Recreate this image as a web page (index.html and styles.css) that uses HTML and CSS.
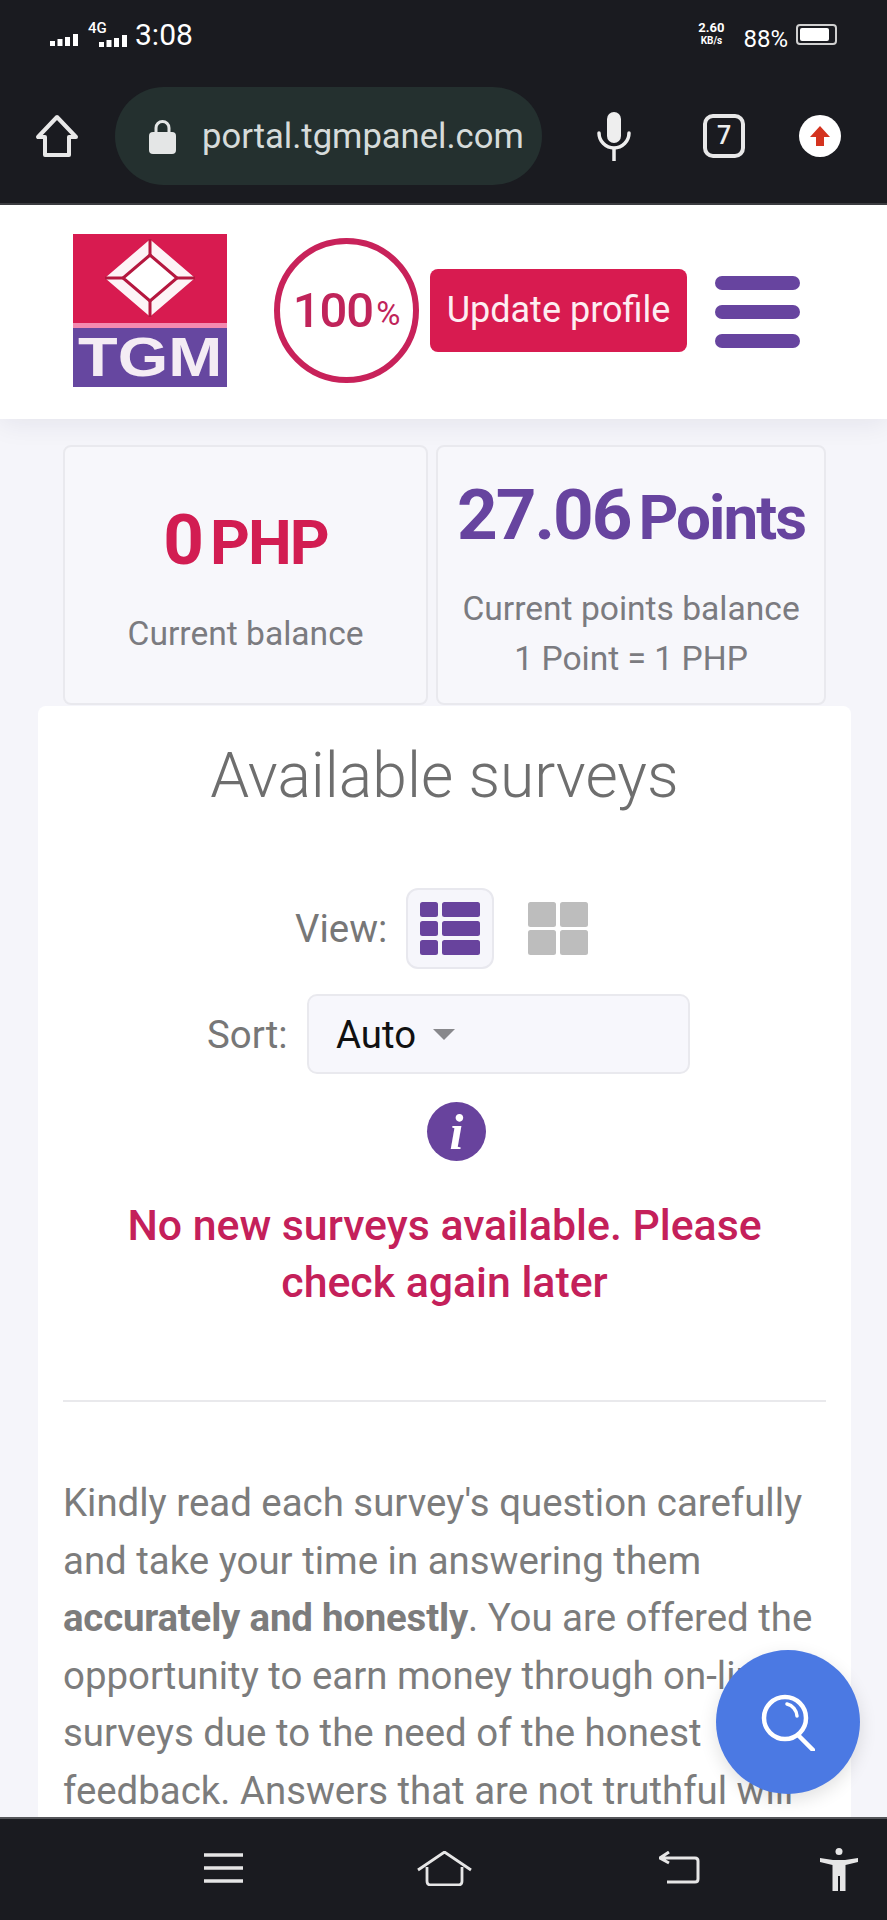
FILE: index.html
```html
<!DOCTYPE html>
<html lang="en">
<head>
<meta charset="utf-8">
<title>TGM Panel</title>
<link rel="stylesheet" href="styles.css">
</head>
<body>
<div class="screen">
  <div class="chrome">
    <div class="status">
      <div class="status-left">
        <svg class="sig1" viewBox="0 0 28 12"><path d="M0 7h5v5H0zM7.500 5h5v7h-5zM15 3h5v9h-5zM23 0h5v12h-5z" fill="#fff"/></svg>
        <div class="net">
          <span class="net-g">4G</span>
          <svg class="sig2" viewBox="0 0 28 12"><path d="M0 7h5v5H0zM7.500 5h5v7h-5zM15 3h5v9h-5zM23 0h5v12h-5z" fill="#fff"/></svg>
        </div>
        <span class="clock">3:08</span>
      </div>
      <div class="status-right">
        <div class="speed"><span class="speed-n">2.60</span><span class="speed-u">KB/s</span></div>
        <span class="batt-t">88%</span>
        <div class="batt"><div class="batt-fill"></div></div>
      </div>
    </div>
    <div class="addr">
      <svg class="i-home" viewBox="0 0 44 44"><path d="M22 3 3 23h7v18h24V23h7z" fill="none" stroke="#e8e8e8" stroke-width="4" stroke-linejoin="round"/></svg>
      <div class="pill">
        <svg class="i-lock" viewBox="0 0 27 35"><path d="M7 15V9a6.500 6.500 0 0 1 13 0v6" fill="none" stroke="#e4e6e6" stroke-width="3"/><rect x="0" y="13" width="27" height="22" rx="4" fill="#e4e6e6"/></svg>
        <span class="url">portal.tgmpanel.com</span>
      </div>
      <svg class="i-mic" viewBox="0 0 34 49"><rect x="10" y="0" width="14" height="31" rx="7" fill="#eee"/><path d="M2 21a15 15 0 0 0 30 0M17 36v13" fill="none" stroke="#eee" stroke-width="3.500" stroke-linecap="round"/></svg>
      <div class="tabs">7</div>
      <div class="update"><svg class="i-up" viewBox="0 0 24 24"><path d="M12 2 22 13h-6v9H8v-9H2z" fill="#d4331f"/></svg></div>
    </div>
  </div>

  <div class="page">
    <header class="head">
      <div class="logo">
        <div class="logo-top">
          <svg class="logo-mark" viewBox="0 0 90 78">
            <path d="M45 3 87 39 45 75 3 39z" fill="#fdf3f6" stroke="#fdf3f6" stroke-width="4" stroke-linejoin="round"/>
            <path d="M45 16 72 39 45 62 18 39z" fill="#fff" stroke="#b5173f" stroke-width="3"/>
            <path d="M45 0v16M45 62v16M0 39h18M72 39h18" stroke="#b5173f" stroke-width="3"/>
          </svg>
        </div>
        <div class="logo-bot"><span class="logo-t">TGM</span></div>
      </div>
      <div class="ring"><span class="ring-n">100</span><span class="ring-p">%</span></div>
      <div class="btn-up">Update profile</div>
      <div class="burger"><span class="bar"></span><span class="bar"></span><span class="bar"></span></div>
    </header>

    <div class="stats">
      <div class="stat">
        <div class="amount red"><span class="big">0</span> <span class="unit">PHP</span></div>
        <div class="lbl">Current balance</div>
      </div>
      <div class="stat">
        <div class="amount purple"><span class="big">27.06</span> <span class="unit">Points</span></div>
        <div class="lbl">Current points balance<br>1 Point = 1 PHP</div>
      </div>
    </div>

    <main class="card">
      <h1 class="title">Available surveys</h1>
      <div class="view-row">
        <span class="ctl-l">View:</span>
        <div class="view-btn active">
          <svg class="i-view" viewBox="0 0 60 53" fill="#68439d">
            <rect width="18" height="15" rx="2.500"/><rect x="22" width="38" height="15" rx="2.500"/>
            <rect y="19" width="18" height="15" rx="2.500"/><rect x="22" y="19" width="38" height="15" rx="2.500"/>
            <rect y="38" width="18" height="15" rx="2.500"/><rect x="22" y="38" width="38" height="15" rx="2.500"/>
          </svg>
        </div>
        <div class="view-btn">
          <svg class="i-view" viewBox="0 0 60 53" fill="#bdbdbd">
            <rect width="28" height="25" rx="2.500"/><rect x="32" width="28" height="25" rx="2.500"/>
            <rect y="28" width="28" height="25" rx="2.500"/><rect x="32" y="28" width="28" height="25" rx="2.500"/>
          </svg>
        </div>
      </div>
      <div class="sort-row">
        <span class="ctl-l">Sort:</span>
        <div class="select"><span>Auto</span><span class="caret"></span></div>
      </div>
      <div class="info"><span class="info-i">i</span></div>
      <p class="none">No new surveys available. Please check again later</p>
      <hr class="rule">
      <p class="copy">Kindly read each survey's question carefully and take your time in answering them <strong>accurately and honestly</strong>. You are offered the opportunity to earn money through on-line surveys due to the need of the honest feedback. Answers that are not truthful will</p>
    </main>
  </div>

  <div class="fab">
    <svg class="i-search" viewBox="0 0 54 57"><circle cx="24" cy="24" r="21" fill="none" stroke="#fff" stroke-width="4.500"/><path d="M37 41 52 56" stroke="#fff" stroke-width="4.500" stroke-linecap="round"/><path d="M26 10a13 13 0 0 1 10 12" fill="none" stroke="#fff" stroke-width="3.500" stroke-linecap="round"/></svg>
  </div>

  <nav class="nav">
    <svg class="n-menu" viewBox="0 0 39 30"><path d="M0 2h39M0 15h39M0 28h39" stroke="#e6e6e6" stroke-width="3.500"/></svg>
    <svg class="n-home" viewBox="0 0 55 35"><path d="M1 19 27.500 1 54 19M10 16v14q0 4 4 4h27q4 0 4-4V16" fill="none" stroke="#e6e6e6" stroke-width="2.800"/></svg>
    <svg class="n-back" viewBox="0 0 41 33"><path d="M10 1 1 7l9 5M2 7h34q3 0 3 3v18q0 3-3 3H8" fill="none" stroke="#e6e6e6" stroke-width="3"/></svg>
    <svg class="n-person" viewBox="0 0 38 43"><circle cx="19" cy="3.500" r="3.500" fill="#e6e6e6"/><path d="M0 10 13 12h12l13-2v4L25.500 17v26H20V28h-2v15h-5.500V17L0 14z" fill="#e6e6e6"/></svg>
  </nav>
</div>
</body>
</html>
```

FILE: styles.css
```css
* { box-sizing: border-box; }
html, body { margin: 0; padding: 0; }
body { font-family: Roboto, "Liberation Sans", sans-serif; background: #f5f5fa; }
.screen { position: relative; width: 887px; height: 1920px; overflow: hidden; display: flex; flex-direction: column; }

/* Browser chrome */
.chrome { flex: none; height: 205px; background: #1a1b20; color: #fff; padding: 0 46px 0 35px; border-bottom: 2px solid #3b3c40; }
.status { height: 69px; padding: 21px 0 0 15px; display: flex; justify-content: space-between; align-items: flex-start; }
.status-left { display: flex; align-items: flex-start; }
.sig1 { width: 28px; height: 12px; margin-top: 13px; }
.net { position: relative; width: 39px; height: 26px; margin-left: 10px; }
.net-g { position: absolute; left: 0; top: 0; font-size: 15px; line-height: 14px; font-weight: 500; }
.sig2 { position: absolute; left: 11px; bottom: 0; width: 28px; height: 12px; }
.clock { font-size: 30px; line-height: 28px; margin-left: 8px; }
.status-right { display: flex; align-items: flex-start; margin-right: 4px; }
.speed { display: flex; flex-direction: column; align-items: center; width: 30px; font-weight: 700; }
.speed-n { font-size: 13px; line-height: 14px; }
.speed-u { font-size: 10px; line-height: 12px; }
.batt-t { font-size: 24px; line-height: 24px; margin: 6px 0 0 17px; }
.batt { width: 41px; height: 21px; margin: 3px 0 0 8px; border: 2px solid #d0d0d0; border-radius: 4px; padding: 2px; }
.batt-fill { width: 88%; height: 100%; background: #fff; border-radius: 2px; }

.addr { height: 134px; display: flex; align-items: center; }
.i-home { width: 44px; height: 44px; flex: none; }
.pill { width: 427px; height: 98px; margin-left: 36px; background: #24302f; border-radius: 49px; display: flex; align-items: center; padding-left: 34px; flex: none; }
.i-lock { width: 27px; height: 35px; flex: none; }
.url { font-size: 34.6px; color: #d6dbda; margin-left: 26px; white-space: nowrap; }
.i-mic { width: 34px; height: 49px; margin-left: 55px; flex: none; }
.tabs { width: 42px; height: 44px; margin-left: 72px; border: 4px solid #e8e8e8; border-radius: 10px; font-size: 25px; font-weight: 500; line-height: 35px; text-align: center; color: #eee; flex: none; }
.update { width: 42px; height: 42px; margin-left: 54px; background: #fff; border-radius: 50%; display: flex; align-items: center; justify-content: center; flex: none; }
.i-up { width: 24px; height: 24px; }

/* Page */
.page { flex: 1; min-height: 0; overflow: hidden; display: flex; flex-direction: column; }
.head { flex: none; height: 214px; background: #fff; display: flex; align-items: center; padding: 0 0 4px 73px; box-shadow: 0 4px 26px rgba(30, 30, 60, 0.08); position: relative; }
.logo { width: 154px; height: 153px; display: flex; flex-direction: column; flex: none; }
.logo-top { height: 94px; background: #d81b50; border-bottom: 5px solid #f48ab0; display: flex; align-items: center; justify-content: center; }
.logo-mark { width: 90px; height: 78px; }
.logo-bot { flex: 1; background: #6647a0; display: flex; align-items: center; justify-content: center; }
.logo-t { color: #f4ecf4; font-family: "Liberation Sans", sans-serif; font-weight: 700; font-size: 55px; line-height: 1; transform: scaleX(1.18); }
.ring { width: 145px; height: 145px; margin-left: 47px; border: 6px solid #c8225a; border-radius: 50%; display: flex; align-items: center; justify-content: center; color: #c0245a; flex: none; }
.ring-n { font-size: 49px; font-weight: 500; letter-spacing: -1px; }
.ring-p { font-size: 33px; margin: 7px 0 0 3px; }
.btn-up { width: 257px; height: 83px; margin-left: 11px; background: #d81b50; border-radius: 8px; color: #fdeef2; font-size: 36px; display: flex; align-items: center; justify-content: center; flex: none; }
.burger { width: 85px; height: 72px; margin: 3px 0 0 28px; display: flex; flex-direction: column; justify-content: space-between; flex: none; }
.bar { height: 14px; background: #67449f; border-radius: 7px; }

.stats { flex: none; display: flex; gap: 8px; margin: 26px 0 1px 63px; width: 763px; }
.stat { flex: 365 1 0; height: 260px; padding-top: 6px; background: #f7f7fb; border: 2px solid #e9e9ee; border-radius: 8px; display: flex; flex-direction: column; align-items: center; justify-content: center; }
.stat + .stat { flex: 390 1 0; }
.amount { font-weight: 700; line-height: 84px; white-space: nowrap; }
.big { font-size: 71px; letter-spacing: -2px; }
.unit { font-size: 62px; letter-spacing: -2px; margin-left: 4px; }
.red { color: #d21d52; }
.purple { color: #67449f; }
.lbl { margin-top: 8px; font-size: 33.6px; line-height: 50px; color: #7b7b80; text-align: center; }

.card { flex: none; width: 813px; margin-left: 38px; background: #fff; border-radius: 8px 8px 0 0; padding: 0 25px; color: #777; }
.title { margin: 36px 0 0; font-size: 62.4px; line-height: 68px; font-weight: 300; text-align: center; color: #6e6e6e; }
.ctl-l { font-size: 38.4px; color: #777; }
.view-row { display: flex; align-items: center; margin: 78px 0 0 232px; }
.view-btn { width: 88px; height: 81px; border: 2px solid transparent; border-radius: 12px; display: flex; align-items: center; justify-content: center; margin-right: 20px; }
.view-row .ctl-l { margin-right: 19px; }
.view-btn.active { background: #f6f6fb; border-color: #e8e8ee; }
.i-view { width: 60px; height: 53px; }
.sort-row { display: flex; align-items: center; margin: 25px 0 0 144px; }
.sort-row .ctl-l { width: 100px; }
.select { width: 383px; height: 80px; background: #f7f7fc; border: 2px solid #e9e9ee; border-radius: 10px; padding-left: 27px; font-size: 38.4px; color: #111; display: flex; align-items: center; }
.caret { width: 0; height: 0; margin-left: 17px; border-left: 11px solid transparent; border-right: 11px solid transparent; border-top: 11px solid #88888c; }
.info { width: 59px; height: 59px; margin: 28px 0 0 364px; background: #68439d; border-radius: 50%; display: flex; align-items: center; justify-content: center; color: #fff; }
.info-i { font-family: "Liberation Serif", serif; font-style: italic; font-weight: 700; font-size: 50px; line-height: 1; }
.none { margin: 36px 0 0; padding: 0 20px; font-size: 42.8px; line-height: 57px; font-weight: 500; color: #c4205a; text-align: center; }
.rule { margin: 89px 0 0; border: 0; border-top: 2px solid #e9e9ec; }
.copy { margin: 72px 0 0; font-size: 38.4px; line-height: 57.6px; font-weight: 400; color: #7c7c7c; }
.copy strong { font-weight: 700; letter-spacing: -0.2px; }

/* Overlay */
.fab { position: absolute; left: 716px; top: 1650px; width: 144px; height: 144px; background: #4b79e3; border-radius: 50%; box-shadow: 0 6px 18px rgba(0, 0, 0, 0.12); display: flex; align-items: center; justify-content: center; }
.i-search { width: 54px; height: 57px; }

/* Nav */
.nav { flex: none; height: 103px; background: #1a1b20; border-top: 2px solid #55565a; position: relative; z-index: 2; display: flex; align-items: flex-start; padding: 32px 29px 0 204px; }
.n-menu { width: 39px; height: 30px; margin-top: 2px; }
.n-home { width: 55px; height: 35px; margin-left: 174px; }
.n-back { width: 41px; height: 33px; margin-left: 187px; }
.n-person { width: 38px; height: 43px; margin-left: 120px; margin-top: -3px; }
```
